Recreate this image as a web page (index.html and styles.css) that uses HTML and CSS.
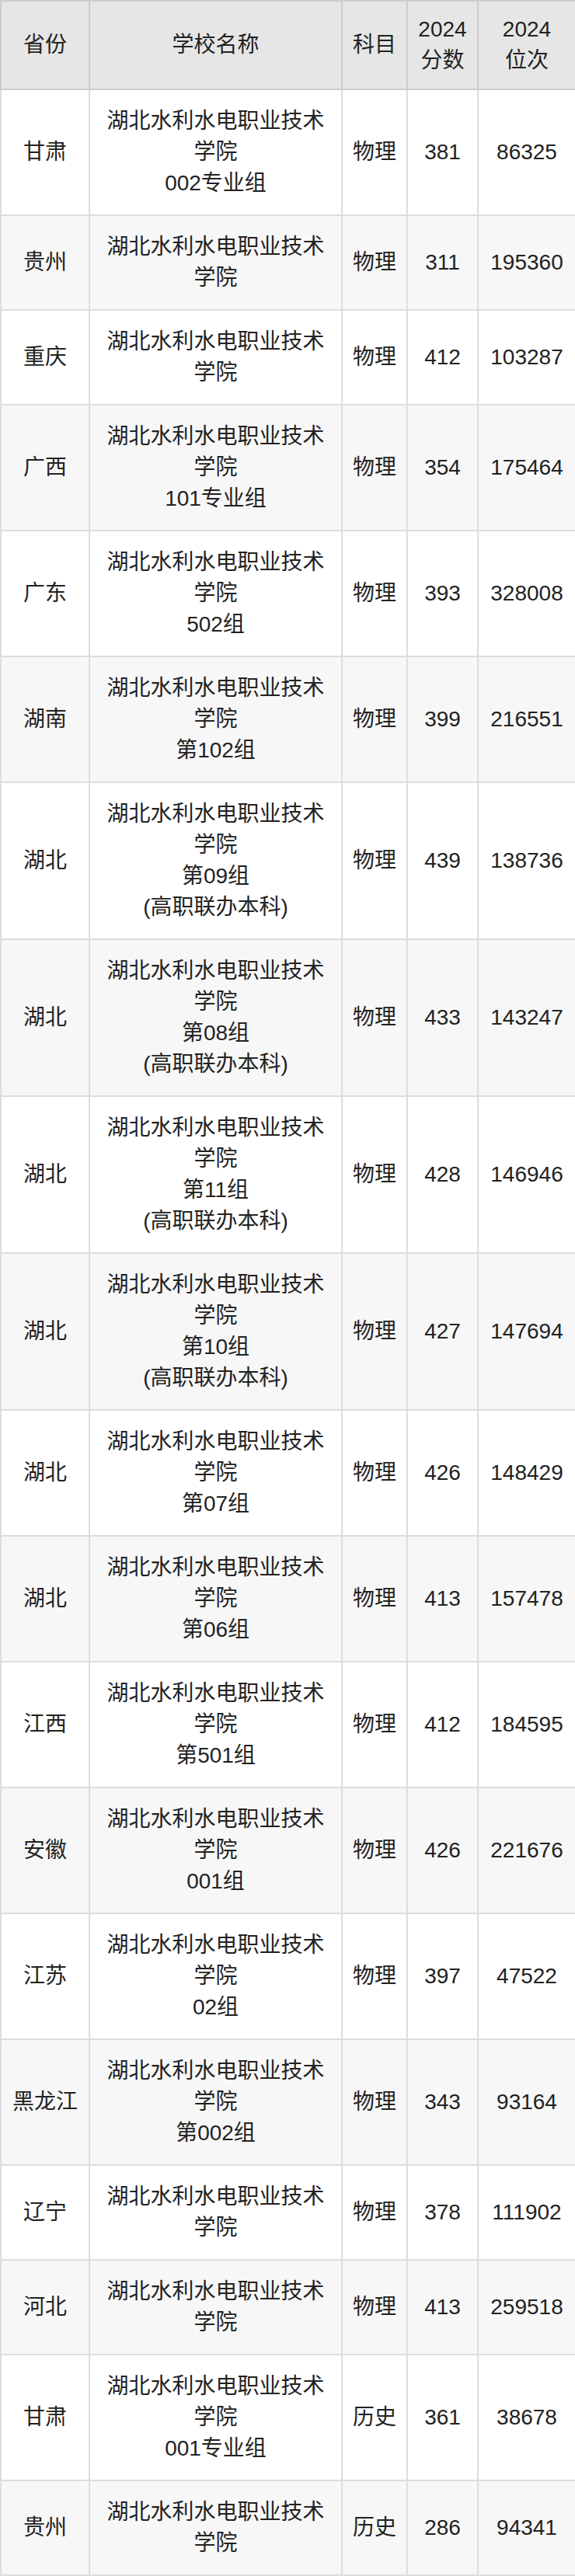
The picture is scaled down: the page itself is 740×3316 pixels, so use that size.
FILE: index.html
```html
<!DOCTYPE html>
<html lang="zh-CN">
<head>
<meta charset="utf-8">
<title>湖北水利水电职业技术学院 2024 分数线</title>
<link rel="stylesheet" href="styles.css">
</head>
<body>
<table class="score-table">
  <colgroup>
    <col class="c-prov">
    <col class="c-school">
    <col class="c-subj">
    <col class="c-score">
    <col class="c-rank">
  </colgroup>
  <thead>
    <tr>
      <th>省份</th>
      <th>学校名称</th>
      <th>科目</th>
      <th>2024<br>分数</th>
      <th>2024<br>位次</th>
    </tr>
  </thead>
  <tbody>
    <tr><td>甘肃</td><td>湖北水利水电职业技术学院<br>002专业组</td><td>物理</td><td>381</td><td>86325</td></tr>
    <tr><td>贵州</td><td>湖北水利水电职业技术学院</td><td>物理</td><td>311</td><td>195360</td></tr>
    <tr><td>重庆</td><td>湖北水利水电职业技术学院</td><td>物理</td><td>412</td><td>103287</td></tr>
    <tr><td>广西</td><td>湖北水利水电职业技术学院<br>101专业组</td><td>物理</td><td>354</td><td>175464</td></tr>
    <tr><td>广东</td><td>湖北水利水电职业技术学院<br>502组</td><td>物理</td><td>393</td><td>328008</td></tr>
    <tr><td>湖南</td><td>湖北水利水电职业技术学院<br>第102组</td><td>物理</td><td>399</td><td>216551</td></tr>
    <tr><td>湖北</td><td>湖北水利水电职业技术学院<br>第09组<br>(高职联办本科)</td><td>物理</td><td>439</td><td>138736</td></tr>
    <tr><td>湖北</td><td>湖北水利水电职业技术学院<br>第08组<br>(高职联办本科)</td><td>物理</td><td>433</td><td>143247</td></tr>
    <tr><td>湖北</td><td>湖北水利水电职业技术学院<br>第11组<br>(高职联办本科)</td><td>物理</td><td>428</td><td>146946</td></tr>
    <tr><td>湖北</td><td>湖北水利水电职业技术学院<br>第10组<br>(高职联办本科)</td><td>物理</td><td>427</td><td>147694</td></tr>
    <tr><td>湖北</td><td>湖北水利水电职业技术学院<br>第07组</td><td>物理</td><td>426</td><td>148429</td></tr>
    <tr><td>湖北</td><td>湖北水利水电职业技术学院<br>第06组</td><td>物理</td><td>413</td><td>157478</td></tr>
    <tr><td>江西</td><td>湖北水利水电职业技术学院<br>第501组</td><td>物理</td><td>412</td><td>184595</td></tr>
    <tr><td>安徽</td><td>湖北水利水电职业技术学院<br>001组</td><td>物理</td><td>426</td><td>221676</td></tr>
    <tr><td>江苏</td><td>湖北水利水电职业技术学院<br>02组</td><td>物理</td><td>397</td><td>47522</td></tr>
    <tr><td>黑龙江</td><td>湖北水利水电职业技术学院<br>第002组</td><td>物理</td><td>343</td><td>93164</td></tr>
    <tr><td>辽宁</td><td>湖北水利水电职业技术学院</td><td>物理</td><td>378</td><td>111902</td></tr>
    <tr><td>河北</td><td>湖北水利水电职业技术学院</td><td>物理</td><td>413</td><td>259518</td></tr>
    <tr><td>甘肃</td><td>湖北水利水电职业技术学院<br>001专业组</td><td>历史</td><td>361</td><td>38678</td></tr>
    <tr><td>贵州</td><td>湖北水利水电职业技术学院</td><td>历史</td><td>286</td><td>94341</td></tr>
  </tbody>
</table>
</body>
</html>
```

FILE: styles.css
```css
html, body {
  margin: 0;
  padding: 0;
  background: #ffffff;
}

.score-table {
  width: 740px;
  table-layout: fixed;
  border-collapse: collapse;
  font-family: "Liberation Sans", "Noto Sans CJK SC", sans-serif;
  font-size: 28px;
  color: #222222;
}

.c-prov { width: 114px; }
.c-school { width: 325px; }
.c-subj { width: 84px; }
.c-score { width: 91px; }
.c-rank { width: 126px; }

.score-table th,
.score-table td {
  text-align: center;
  vertical-align: middle;
  padding: 20px 10px;
  line-height: 40px;
  border: 2px solid #dddddd;
  font-weight: normal;
}

.score-table th {
  background: #e6e6e6;
  border-color: #cccccc;
  padding: 16px 8px;
}

.score-table tbody tr:nth-child(odd) td {
  background: #ffffff;
}

.score-table tbody tr:nth-child(even) td {
  background: #f7f7f7;
}
```
